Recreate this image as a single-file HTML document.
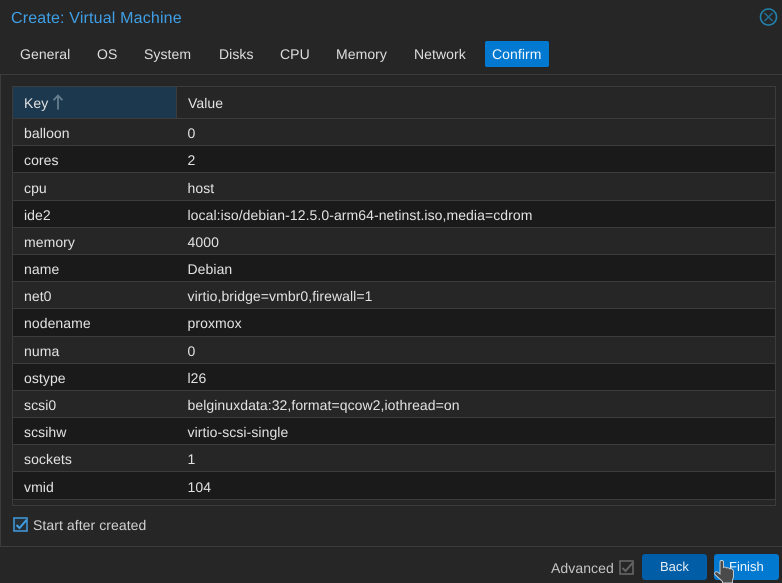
<!DOCTYPE html>
<html><head><meta charset="utf-8">
<style>
html,body{margin:0;padding:0;background:#262626;}
body{width:782px;height:583px;overflow:hidden;position:relative;font-family:"Liberation Sans",sans-serif;font-size:14px;color:#e0e0e0;text-rendering:geometricPrecision;letter-spacing:.07px;}
.a{position:absolute;}
.t{position:absolute;white-space:nowrap;line-height:16px;}
.tab{position:absolute;top:46px;line-height:16px;color:#dedede;white-space:nowrap;}
.row{position:absolute;left:13px;width:762px;box-sizing:border-box;border-bottom:1px solid #3c3c3c;}
.row span{position:absolute;white-space:nowrap;line-height:16px;color:#e2e2e2;}
.row .k{left:11px;}
.row .v{left:174.5px;}
</style></head><body>
<div class="t" style="left:11px;top:10px;font-size:16px;line-height:18px;color:#3f9fe6;letter-spacing:.17px;">Create: Virtual Machine</div>
<svg class="a" style="left:759px;top:7px" width="20" height="20" viewBox="0 0 20 20"><circle cx="9.5" cy="10" r="8" fill="none" stroke="#2183ad" stroke-width="1.6"/><path d="M5.5 6L13.5 14M13.5 6L5.5 14" stroke="#1f6f93" stroke-width="1.5" fill="none"/></svg>
<div class="tab" style="left:20px">General</div>
<div class="tab" style="left:97px">OS</div>
<div class="tab" style="left:144px">System</div>
<div class="tab" style="left:219px">Disks</div>
<div class="tab" style="left:280px">CPU</div>
<div class="tab" style="left:336px">Memory</div>
<div class="tab" style="left:414px">Network</div>
<div class="a" style="left:485px;top:41px;width:64px;height:26px;background:#0279d1;border-radius:2px;"></div>
<div class="tab" style="left:492px;color:#f2f7fc">Confirm</div>

<div class="a" style="left:0;top:74px;width:782px;height:473px;box-sizing:border-box;border-top:1px solid #3c3c3c;border-bottom:1px solid #3c3c3c;border-left:1px solid #3c3c3c;"></div>
<div class="a" style="left:12px;top:86px;width:764px;height:420px;box-sizing:border-box;border:1px solid #3c3c3c;"></div>
<div class="a" style="left:13px;top:87px;width:163px;height:31px;background:#1c384e;border-right:1px solid #3c3c3c;"></div>
<div class="a" style="left:13px;top:118px;width:762px;height:1px;background:#3c3c3c;"></div>
<div class="t" style="left:24px;top:95px;color:#e2e2e2">Key</div>
<svg class="a" style="left:52px;top:94px" width="12" height="16" viewBox="0 0 12 16"><path d="M6 15.5V1.5M1.5 6.2L6 1.5L10.5 6.2" fill="none" stroke="#667d8d" stroke-width="1.8"/></svg>
<div class="t" style="left:188px;top:95px;color:#e2e2e2">Value</div>

<div class="row" style="top:119px;height:27px;background:#262626"><span class="k" style="top:6px">balloon</span><span class="v" style="top:6px">0</span></div>
<div class="row" style="top:146px;height:27px;background:#1a1a1a"><span class="k" style="top:6px">cores</span><span class="v" style="top:6px">2</span></div>
<div class="row" style="top:173px;height:28px;background:#262626"><span class="k" style="top:7px">cpu</span><span class="v" style="top:7px">host</span></div>
<div class="row" style="top:201px;height:27px;background:#1a1a1a"><span class="k" style="top:6px">ide2</span><span class="v" style="top:6px">local:iso/debian-12.5.0-arm64-netinst.iso,media=cdrom</span></div>
<div class="row" style="top:228px;height:27px;background:#262626"><span class="k" style="top:6px">memory</span><span class="v" style="top:6px">4000</span></div>
<div class="row" style="top:255px;height:27px;background:#1a1a1a"><span class="k" style="top:6px">name</span><span class="v" style="top:6px">Debian</span></div>
<div class="row" style="top:282px;height:27px;background:#262626"><span class="k" style="top:6px">net0</span><span class="v" style="top:6px">virtio,bridge=vmbr0,firewall=1</span></div>
<div class="row" style="top:309px;height:28px;background:#1a1a1a"><span class="k" style="top:6px">nodename</span><span class="v" style="top:6px">proxmox</span></div>
<div class="row" style="top:337px;height:27px;background:#262626"><span class="k" style="top:6px">numa</span><span class="v" style="top:6px">0</span></div>
<div class="row" style="top:364px;height:27px;background:#1a1a1a"><span class="k" style="top:6px">ostype</span><span class="v" style="top:6px">l26</span></div>
<div class="row" style="top:391px;height:27px;background:#262626"><span class="k" style="top:6px">scsi0</span><span class="v" style="top:6px">belginuxdata:32,format=qcow2,iothread=on</span></div>
<div class="row" style="top:418px;height:27px;background:#1a1a1a"><span class="k" style="top:6px">scsihw</span><span class="v" style="top:6px">virtio-scsi-single</span></div>
<div class="row" style="top:445px;height:27px;background:#262626"><span class="k" style="top:6px">sockets</span><span class="v" style="top:6px">1</span></div>
<div class="row" style="top:472px;height:28px;background:#1a1a1a"><span class="k" style="top:7px">vmid</span><span class="v" style="top:7px">104</span></div>

<svg class="a" style="left:13px;top:517px" width="16" height="16" viewBox="0 0 16 16"><rect x="1" y="1" width="13" height="13" fill="#262f36" stroke="#3f93d4" stroke-width="1.6"/><path d="M3.5 8L6.5 11L13.5 3" fill="none" stroke="#3f9fe6" stroke-width="2"/></svg>
<div class="t" style="left:33px;top:517px;color:#d0d0d0">Start after created</div>

<div class="t" style="left:551px;top:560px;color:#c4c4c4">Advanced</div>
<svg class="a" style="left:619px;top:560px" width="16" height="16" viewBox="0 0 16 16"><rect x="1" y="1" width="13" height="13" fill="none" stroke="#666" stroke-width="1.6"/><path d="M3.5 8L6.5 11L13.5 3" fill="none" stroke="#666" stroke-width="1.9"/></svg>
<div class="a" style="left:642px;top:554px;width:65px;height:26px;background:#015ea6;border-radius:3px;"></div>
<div class="t" style="left:660px;top:559px;font-size:13px;color:#e6eef5;letter-spacing:0">Back</div>
<div class="a" style="left:714px;top:554px;width:65px;height:26px;background:#0279d1;border-radius:3px;"></div>
<div class="t" style="left:729px;top:559px;font-size:13px;color:#f0f6fb;letter-spacing:0">Finish</div>
<svg class="a" style="left:713px;top:559px" width="24" height="24" viewBox="0 0 24 24"><path d="M7 13V3C7 1 10.5 1 10.5 3V8.5C11.5 7.8 13 8 13.5 9C14.5 8.4 16 8.8 16.5 9.8C17.8 9.3 20.5 10 20.5 12.5V17C20.5 19 20 20 19.5 21V24H9.5V22.5C7.5 20.5 4.5 18 2 15.5C0.8 14 2.5 12 4.5 13L7 15Z" fill="#4a4a4a" stroke="#c9d2d9" stroke-width="0.9"/></svg>
</body></html>
